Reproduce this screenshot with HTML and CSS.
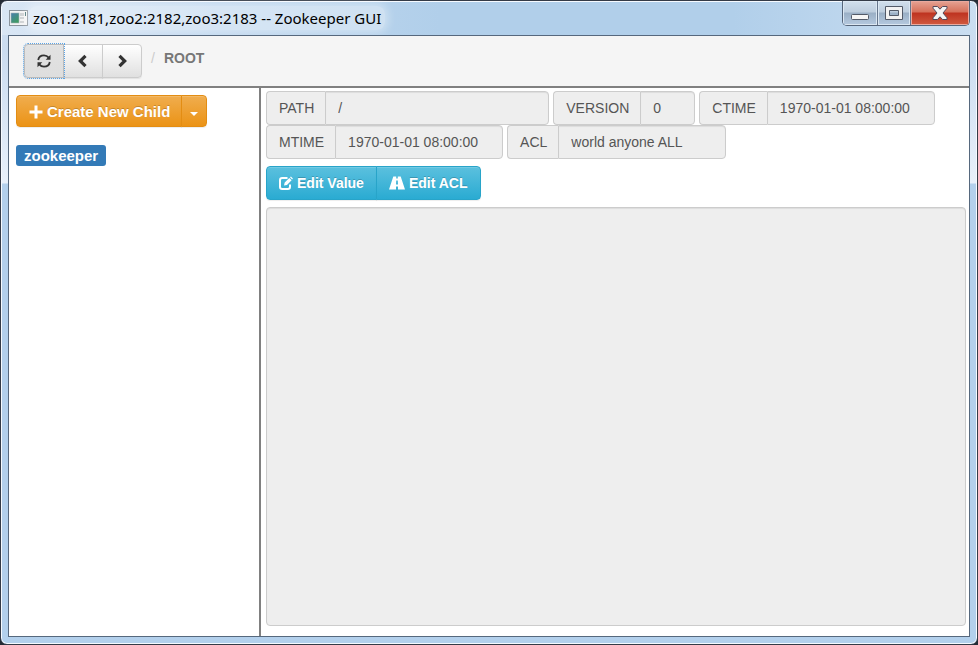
FILE: index.html
```html
<!DOCTYPE html>
<html lang="en">
<head>
<meta charset="utf-8">
<title>zoo1:2181,zoo2:2182,zoo3:2183 -- Zookeeper GUI</title>
<link rel="stylesheet" href="styles.css">
</head>
<body>
<div class="window">
  <header class="titlebar">
    <svg class="app-icon" width="19" height="16" viewBox="0 0 19 16" aria-hidden="true">
      <defs><linearGradient id="scene" x2="0.6" y2="1"><stop stop-color="#4b7fb0"/><stop offset="1" stop-color="#3f9a62"/></linearGradient></defs>
      <rect x=".5" y=".5" width="18" height="15" fill="#f4f4f4" stroke="#8b949c"/>
      <rect x="2" y="3" width="8" height="10" fill="url(#scene)" stroke="#a5b3b5" stroke-width=".6"/>
      <path d="M11 3h4v3h-4zM11 7h4v2h-4zM11 11h4v2h-4z" fill="#cfd2d4"/>
      <path d="M16 2h1v4h-1z" fill="#4d7778"/>
    </svg>
    <h1 class="title"><span>zoo1:2181,zoo2:2182,zoo3:2183 -- Zookeeper GUI</span></h1>
    <div class="captions">
      <button class="caption minimize" type="button" aria-label="Minimize">
        <svg width="18" height="6" viewBox="0 0 18 6"><rect x=".5" y=".5" width="17" height="5" rx="1" fill="#f5f5f5" stroke="#535a68"/></svg>
      </button>
      <button class="caption maximize" type="button" aria-label="Maximize">
        <svg width="18" height="14" viewBox="0 0 18 14"><path d="M.5.5h17v13H.5zM4.500 4.500v5h9v-5z" fill="#f2f2f2" fill-rule="evenodd" stroke="#535a68"/></svg>
      </button>
      <button class="caption close" type="button" aria-label="Close">
        <svg width="16" height="14" viewBox="0 0 16 14"><path d="M1 .5h4.500L8 3.200 10.500.5H15v1.700L11 7l4 4.800v1.700h-4.500L8 10.800l-2.500 2.700H1v-1.700L5 7 1 2.200z" fill="#f4f4f4" stroke="#54485a" stroke-linejoin="round"/></svg>
      </button>
    </div>
  </header>
  <div class="client">
    <nav class="toolbar">
      <div class="group">
        <button class="btn tool active" type="button" aria-label="Refresh">
          <svg width="14" height="14" viewBox="0 0 14 14" fill="none" stroke="#333" stroke-width="1.800"><path d="M1.200 6C1.700 3 4 1.300 7 1.300c2 0 3.500.8 4.700 2.300M12.800 8c-.5 3-2.800 4.700-5.800 4.700-2 0-3.500-.8-4.700-2.300"/><path d="M13.500.7V5.800H8.700zM.5 13.300V8.200h4.800z" fill="#333" stroke="none"/></svg>
        </button>
        <button class="btn tool" type="button" aria-label="Back">
          <svg width="14" height="14" viewBox="0 0 14 14" fill="none" stroke="#333" stroke-width="3.200"><path d="M9.500 1.800 4.300 7l5.200 5.200"/></svg>
        </button>
        <button class="btn tool" type="button" aria-label="Forward">
          <svg width="14" height="14" viewBox="0 0 14 14" fill="none" stroke="#333" stroke-width="3.200"><path d="M4.500 1.800 9.700 7l-5.200 5.200"/></svg>
        </button>
      </div>
      <div class="crumbs"><span class="slash">/</span><span>ROOT</span></div>
    </nav>
    <div class="panes">
      <aside class="tree">
        <div class="group">
          <button class="btn warning" type="button">
            <svg width="14" height="14" viewBox="0 0 14 14" fill="#fff"><path d="M5.500.5h3v5h5v3h-5v5h-3v-5h-5v-3h5z"/></svg>
            <span>Create New Child</span>
          </button>
          <button class="btn warning more" type="button" aria-label="More">
            <svg width="8" height="4" viewBox="0 0 8 4" fill="#fff"><path d="M0 0h8L4 4z"/></svg>
          </button>
        </div>
        <a class="node" href="#zookeeper">zookeeper</a>
      </aside>
      <main class="detail">
        <div class="fields">
          <div class="field"><label for="path">PATH</label><input class="long" id="path" value="/" readonly></div>
          <div class="field"><label for="version">VERSION</label><input class="short" id="version" value="0" readonly></div>
          <div class="field"><label for="ctime">CTIME</label><input id="ctime" value="1970-01-01 08:00:00" readonly></div>
          <div class="field"><label for="mtime">MTIME</label><input id="mtime" value="1970-01-01 08:00:00" readonly></div>
          <div class="field"><label for="acl">ACL</label><input id="acl" value="world anyone ALL" readonly></div>
        </div>
        <div class="group actions">
          <button class="btn info" type="button">
            <svg width="14" height="14" viewBox="0 0 14 14" fill="none" stroke="#fff"><path d="M8.500 2H3.200Q1 2 1 4.200v6.600Q1 13 3.200 13h5.600Q11 13 11 10.800V8.500" stroke-width="2"/><path d="M5 9.500l.7-3L10.300 2l2.300 2.300L8 8.900zM11 1.300l.9-.8 2 2-.8.900z" fill="#fff" stroke="none"/></svg>
            <span>Edit Value</span>
          </button>
          <button class="btn info" type="button">
            <svg width="16" height="14" viewBox="0 0 16 14" fill="#fff" fill-rule="evenodd"><path d="M4.300.5h2.900v2h1.600v-2h2.900L16 13.500H9v-3H7v3H0zM7.200 4.500 7 8.500h2l-.2-4z"/></svg>
            <span>Edit ACL</span>
          </button>
        </div>
        <textarea class="value" aria-label="Value" readonly></textarea>
      </main>
    </div>
  </div>
</div>
</body>
</html>
```
FILE: styles.css
```css
* { box-sizing: border-box; }

body {
  margin: 0;
  background: #252c35;
  color: #333;
  font: 14px/20px "Liberation Sans", Arial, sans-serif;
}

button, input, textarea { font: inherit; }
svg { display: block; flex: none; }

.window {
  display: flex;
  flex-direction: column;
  min-height: 100vh;
  padding: 0 7px 7px;
  border: 1px solid #343b47;
  border-radius: 7px;
  background:
    linear-gradient(90deg, #d9e6f4, #c1d8ef 22%, #b1cfea 45%, #b1cfea 75%, #cbdef1) 0 0 / 100% 34px no-repeat,
    linear-gradient(#cfe0f2, #cbdcf0 50px, #e8f0fa 182px, #b3d0ec 183px);
  box-shadow: inset 0 0 0 1px #f6faff;
}

.titlebar {
  display: flex;
  align-items: center;
  height: 34px;
  padding-left: 1px;
}

.title {
  flex: 1;
  margin: 0 0 0 1px;
  color: #000;
  font: 15px/20px "Noto Sans", "Open Sans", sans-serif;
}

.title span {
  padding: 2px 4px;
  border-radius: 8px;
  background: rgba(255, 255, 255, .35);
  box-shadow: 0 0 8px 3px rgba(255, 255, 255, .35);
}

.captions {
  display: flex;
  align-self: flex-start;
  border: 1px solid #56657a;
  border-top: 0;
  border-radius: 0 0 5px 5px;
  overflow: hidden;
}

.caption {
  display: flex;
  align-items: center;
  justify-content: center;
  width: 35px;
  height: 24px;
  padding: 0;
  border: 0;
  border-right: 1px solid #65758b;
  background: linear-gradient(#d1dfed, #bdcddd 46%, #9aafc5 50%, #b5c9df);
  box-shadow: inset 0 0 0 1px #dbe7f2;
}

.minimize { align-items: flex-end; padding-bottom: 5px; }
.maximize { width: 33px; }

.close {
  width: 58px;
  border-right: 0;
  background: linear-gradient(#e6a394, #d5705a 46%, #be3320 50%, #d15a40);
  box-shadow: inset 0 0 0 1px #e9a99e;
}

.client {
  display: flex;
  flex: 1;
  flex-direction: column;
  border: 1px solid #56687d;
  background: #fff;
}

.toolbar {
  display: flex;
  align-items: center;
  height: 52px;
  padding: 0 15px;
  border-bottom: 2px solid #808080;
  background: #f5f5f5;
}

.group { display: flex; }

.btn {
  display: flex;
  align-items: center;
  justify-content: center;
  gap: 4px;
  height: 34px;
  padding: 0 12px;
  border: 1px solid;
  font-weight: bold;
  box-shadow: inset 0 1px 0 rgba(255, 255, 255, .15), 0 1px 1px rgba(0, 0, 0, .075);
}

.btn + .btn { margin-left: -1px; }
.btn:first-child { border-radius: 4px 0 0 4px; }
.btn:last-child { border-radius: 0 4px 4px 0; }

.tool {
  width: 40px;
  border-color: #ccc;
  background: linear-gradient(#fff, #e0e0e0);
}

.tool.active {
  z-index: 1;
  background: linear-gradient(#e2e2e2, #dedede);
  border-color: #bbb;
  outline: 1px dotted #5ba4e6;
}

.crumbs {
  display: flex;
  gap: 9px;
  padding: 0 0 6px 9px;
  color: #777;
  font-weight: bold;
}

.slash { color: #ccc; font-weight: normal; }

.panes { display: flex; flex: 1; }

.tree {
  width: 252px;
  padding: 7px;
  border-right: 2px solid #808080;
}

.warning {
  height: 32px;
  padding: 1px 11px 0 12px;
  border-color: #e38d13;
  background: linear-gradient(#f0ad4e, #eb9316);
  color: #fff;
  font-size: 15px;
  text-shadow: 0 -1px 0 rgba(0, 0, 0, .2);
}

.more { padding: 6px 8px 0; }

.node {
  display: inline-block;
  margin-top: 18px;
  padding: 0 8px;
  border-radius: 3px;
  background: #337ab7;
  color: #fff;
  font-size: 15px;
  font-weight: bold;
  line-height: 21px;
  text-decoration: none;
}

.detail {
  display: flex;
  flex: 1;
  flex-direction: column;
  min-width: 0;
  padding: 3px 3px 10px 5px;
}

.fields { display: flex; flex-wrap: wrap; column-gap: 4px; }
.field { display: flex; height: 34px; }

.field label {
  padding: 6px 11px 6px 12px;
  border: 1px solid #ccc;
  border-right: 0;
  border-radius: 4px 0 0 4px;
  background: #eee;
  color: #555;
}

.field input {
  width: 168px;
  padding: 6px 12px;
  border: 1px solid #ccc;
  border-radius: 0 4px 4px 0;
  background: #eee;
  box-shadow: inset 0 1px 1px rgba(0, 0, 0, .075);
  color: #555;
}

.field .long { width: 224px; }
.field .short { width: 55px; }

.actions { margin: 7px 0; }

.info {
  border-color: #28a4c9;
  background: linear-gradient(#5bc0de, #2aabd2);
  color: #fff;
  text-shadow: 0 -1px 0 rgba(0, 0, 0, .2);
}

.value {
  flex: 1;
  width: 100%;
  padding: 6px 12px;
  border: 1px solid #ccc;
  border-radius: 4px;
  background: #eee;
  box-shadow: inset 0 1px 1px rgba(0, 0, 0, .075);
  resize: none;
}
```
